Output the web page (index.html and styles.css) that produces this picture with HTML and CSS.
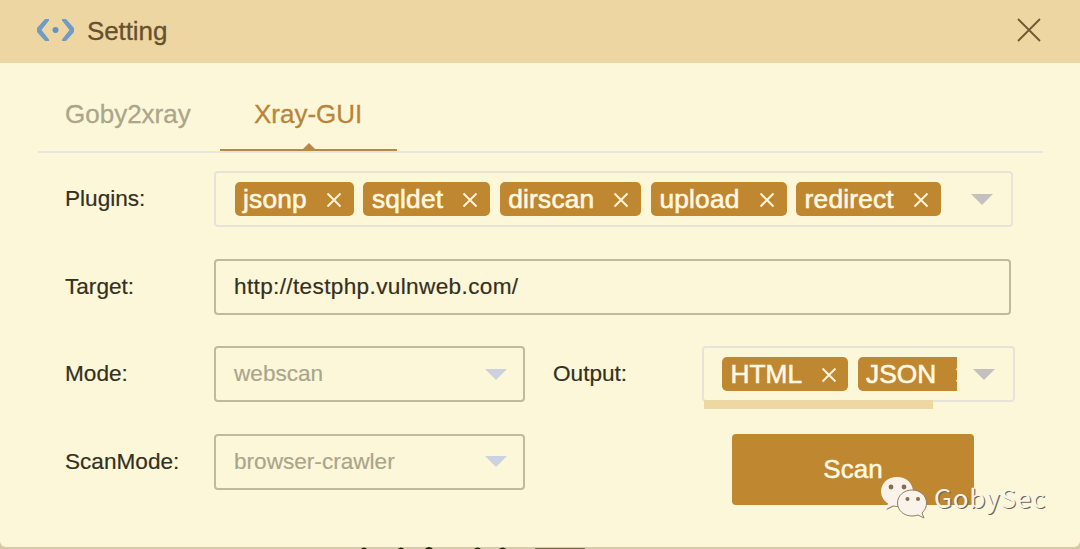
FILE: index.html
```html
<!DOCTYPE html>
<html lang="en">
<head>
<meta charset="utf-8">
<title>Setting</title>
<link rel="stylesheet" href="styles.css">
</head>
<body>
<main class="dialog">
  <header class="titlebar">
    <svg class="logo" viewBox="0 0 40 26" width="40" height="26"><path d="M13 2H9L1 11v4l8 9h4v-1.500L5.500 13 13 3.500zM26 2h4l8 9v4l-8 9h-4v-1.500l7.500-9.500L26 3.500z" fill="#6f9bc5"/><circle cx="19.500" cy="13" r="3" fill="#6394c2"/></svg>
    <h1 class="title">Setting</h1>
    <svg class="close" viewBox="0 0 24 24" width="24" height="24"><path d="m1 1 22 22M23 1 1 23"/></svg>
  </header>
  <nav class="tabs">
    <span class="tab">Goby2xray</span>
    <span class="tab active">Xray-GUI</span>
  </nav>
  <form class="form">
    <span class="label">Plugins:</span>
    <div class="field multi plugins">
      <div class="chips">
        <span class="chip">jsonp<svg viewBox="0 0 16 16"><path d="m1.500 1.500 13 13m0-13-13 13"/></svg></span>
        <span class="chip">sqldet<svg viewBox="0 0 16 16"><path d="m1.500 1.500 13 13m0-13-13 13"/></svg></span>
        <span class="chip">dirscan<svg viewBox="0 0 16 16"><path d="m1.500 1.500 13 13m0-13-13 13"/></svg></span>
        <span class="chip">upload<svg viewBox="0 0 16 16"><path d="m1.500 1.500 13 13m0-13-13 13"/></svg></span>
        <span class="chip">redirect<svg viewBox="0 0 16 16"><path d="m1.500 1.500 13 13m0-13-13 13"/></svg></span>
      </div>
      <i class="arrow grey"></i>
    </div>
    <span class="label">Target:</span>
    <div class="field url">http://testphp.vulnweb.com/</div>
    <span class="label">Mode:</span>
    <div class="field select">webscan<i class="arrow"></i></div>
    <span class="label output-label">Output:</span>
    <div class="field multi output">
      <div class="chips">
        <span class="chip">HTML<svg viewBox="0 0 16 16"><path d="m1.500 1.500 13 13m0-13-13 13"/></svg></span>
        <span class="chip">JSON<svg viewBox="0 0 16 16"><path d="m1.500 1.500 13 13m0-13-13 13"/></svg></span>
      </div>
      <i class="arrow grey"></i>
      <i class="scrollbar"></i>
    </div>
    <span class="label">ScanMode:</span>
    <div class="field select">browser-crawler<i class="arrow"></i></div>
    <button class="scan" type="button">Scan</button>
  </form>
</main>
<svg class="backdrop" viewBox="0 0 1080 2" width="1080" height="2"><path d="M361 2q3-3 6 0zM398 2q3-3 6 0zM425 2q4-4 8 0zM474 2q4-3 7 0zM499 2q4-3 7 0z" fill="#241e0c"/><path d="M535 1h50v1h-50z" fill="#766642"/></svg>
<div class="watermark">
  <svg viewBox="0 0 50 44" width="50" height="44">
    <path class="shade" d="M17 1C8 1 1 7 1 15.500c0 5 3 9.500 7 12L6 33l7-3.500c10 2 20-4 20-14C33 7 26 1 17 1z"/>
    <path class="bubble" d="M17 1C8 1 1 7 1 15.500c0 5 3 9.500 7 12L6 33l7-3.500c10 2 20-4 20-14C33 7 26 1 17 1z"/>
    <path class="bubble front" d="M32 14c-8 0-14.500 5.500-14.500 13s6.500 13 14.500 13q3 0 6-1l6 3-2-5c3-3 4.500-6 4.500-10 0-7.500-6.500-13-14.500-13z"/>
    <g fill="#806f52"><circle cx="11" cy="11" r="2.400"/><circle cx="24" cy="11" r="2.400"/><circle cx="27.500" cy="23" r="2"/><circle cx="38" cy="23" r="2"/></g>
  </svg>
  <span>GobySec</span>
</div>
</body>
</html>
```
FILE: styles.css
```css
* { box-sizing: border-box; }
body {
  margin: 0;
  width: 1080px;
  height: 549px;
  overflow: hidden;
  position: relative;
  background: #d6c9a3;
  font-family: "Liberation Sans", Arial, sans-serif;
  color: #343020;
}
.dialog {
  height: 547px;
  background: #fdf7da;
  border-radius: 0 0 6px 6px;
}
.titlebar {
  height: 63px;
  display: flex;
  align-items: center;
  padding: 0 39px 4px 36px;
  background: #eed6a3;
}
.title {
  margin: 0 auto 0 11px;
  font-size: 26px;
  font-weight: 400;
  line-height: 30px;
  letter-spacing: -.1px;
  color: #65512f;
  -webkit-text-stroke: .3px;
  padding-top: 2px;
}
.logo { margin-top: 1px; }
.close { fill: none; stroke: #6d5833; stroke-width: 1.8; }
.tabs {
  display: flex;
  width: 1005px;
  height: 90px;
  margin-left: 38px;
  border-bottom: 2px solid #e9e6de;
  font-size: 26px;
  line-height: 30px;
}
.tab {
  width: 182px;
  padding: 36px 0 0 27px;
  color: #aaa58b;
  -webkit-text-stroke: .3px;
}
.tab.active {
  position: relative;
  width: 177px;
  height: 88px;
  padding-left: 34px;
  border-bottom: 2px solid #b88943;
  color: #b88538;
}
.tab.active::after {
  content: "";
  position: absolute;
  left: 83px;
  bottom: 0;
  border: 6px solid transparent;
  border-top: 0;
  border-bottom-color: #b88943;
}
.form {
  display: grid;
  grid-template-columns: 149px 311px 177px 313px;
  grid-template-rows: 56px 56px 56px 72px;
  row-gap: 31.5px;
  padding: 18px 0 0 65px;
  font-size: 22.600px;
  align-items: start;
}
.label { line-height: 56px; -webkit-text-stroke: .2px; }
.output-label { padding-left: 28px; }
.field {
  height: 56px;
  border: 2px solid #bfba98;
  border-radius: 4px;
  padding: 0 18px;
  display: flex;
  align-items: center;
}
.multi { border-color: #e8e3d8; justify-content: space-between; }
.plugins { grid-column: 2 / 5; width: 799px; }
.url { grid-column: 2 / 5; width: 797px; letter-spacing: .35px; -webkit-text-stroke: .2px; }
.select { justify-content: space-between; padding-right: 16px; color: #aaa58b; -webkit-text-stroke: .2px; }
.output { position: relative; width: 313px; }
.chips { display: flex; gap: 9.500px; }
.plugins .chips { margin-left: .5px; }
.output .chips { width: 235px; overflow: hidden; }
.chip {
  flex: none;
  display: flex;
  align-items: center;
  height: 34px;
  padding: 0 12px 0 8.500px;
  border-radius: 5px;
  background: #bf8730;
  color: #fff8e2;
  font-size: 26.300px;
  line-height: 34px;
  -webkit-text-stroke: .6px;
}
.plugins .chip { letter-spacing: .2px; }
.chip svg {
  width: 16px;
  height: 16px;
  margin: 2px 0 0 19px;
  fill: none;
  stroke: #fff3d7;
  stroke-width: 2;
}
.output .chip { padding-right: 11.500px; }
.output .chip svg { margin-left: 18.500px; }
.arrow {
  flex: none;
  border: 10px solid transparent;
  border-width: 11px 11px 0;
  border-top-color: #ccd1df;
}
.grey { border-top-color: #c4c0bd; }
.scrollbar {
  position: absolute;
  left: 0;
  top: 52px;
  width: 229px;
  height: 9px;
  background: #edd7a2;
}
.scan {
  grid-column: 4;
  width: 242px;
  height: 71px;
  margin-left: 30px;
  padding: 0;
  border: 0;
  border-radius: 4px;
  background: #bf8730;
  color: #fff8e2;
  font: 26px "Liberation Sans", Arial, sans-serif;
  -webkit-text-stroke: .5px;
}
.backdrop { display: block; }
.watermark {
  position: absolute;
  left: 880px;
  top: 476px;
  display: flex;
  align-items: center;
  font: 26px/44px "Noto Sans CJK SC", "Noto Sans", sans-serif;
  color: #fbf5e9;
  text-shadow: 1.200px 1.200px .5px #6e6859;
}
.watermark span { margin: -3px 0 0 4px; letter-spacing: .8px; }
.bubble { fill: #fbf3e9; }
.front { stroke: #8c806a; stroke-width: 1; }
.shade { fill: #8c806a; transform: translate(.5px, 1px); }
```
